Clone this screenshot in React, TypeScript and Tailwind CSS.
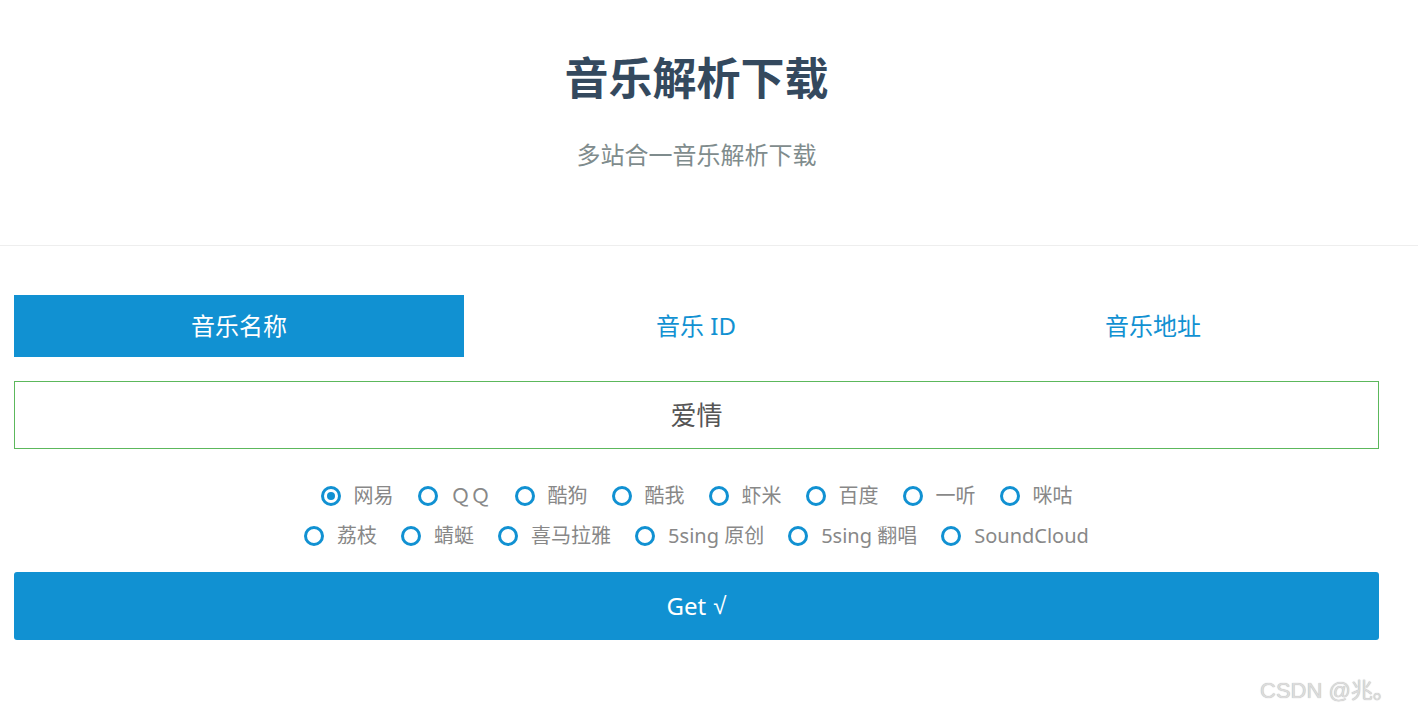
import React from "react";

const FONT = '"Noto Sans", "Noto Sans CJK SC", sans-serif';

function Radio({ label, checked }: { label: string; checked?: boolean }) {
  return (
    <label className="flex items-center mx-[12px] cursor-pointer">
      <span className="w-[20px] h-[20px] rounded-full border-[3px] border-[#1191d2] flex items-center justify-center bg-white">
        {checked && <span className="w-[8px] h-[8px] rounded-full bg-[#1191d2]" />}
      </span>
      <span className="ml-[13px] text-[20px] leading-[40px] text-[#888888]">{label}</span>
    </label>
  );
}

export default function App() {
  const row1 = ["网易", "ＱＱ", "酷狗", "酷我", "虾米", "百度", "一听", "咪咕"];
  const row2 = ["荔枝", "蜻蜓", "喜马拉雅", "5sing 原创", "5sing 翻唱", "SoundCloud"];
  return (
    <div className="w-[1418px] h-[715px] bg-white relative overflow-hidden" style={{ fontFamily: FONT }}>
      <header className="h-[246px] border-b border-[#eeeeee]">
        <div className="w-[1393px] flex flex-col items-center">
          <h1 className="mt-[52px] text-[44px] leading-[52px] font-bold text-[#34495e]">音乐解析下载</h1>
          <p className="mt-[35px] text-[24px] leading-[32px] text-[#7f8c8d]">多站合一音乐解析下载</p>
        </div>
      </header>
      <main className="px-[14px] pt-[49px] w-[1393px]">
        <div className="flex gap-[7px]">
          <div className="w-[450px] h-[62px] bg-[#1191d2] text-white text-[24px] flex items-center justify-center">音乐名称</div>
          <div className="w-[450px] h-[62px] text-[#1191d2] text-[24px] flex items-center justify-center">音乐 ID</div>
          <div className="w-[450px] h-[62px] text-[#1191d2] text-[24px] flex items-center justify-center">音乐地址</div>
        </div>
        <div className="mt-[24px] w-[1365px] h-[68px] border border-[#5cb85c] flex items-center justify-center text-[26px] text-[#555555]">
          爱情
        </div>
        <div className="mt-[27px] flex flex-col items-center w-[1365px]">
          <div className="flex justify-center">
            {row1.map((l, i) => (
              <Radio key={l} label={l} checked={i === 0} />
            ))}
          </div>
          <div className="flex justify-center">
            {row2.map((l) => (
              <Radio key={l} label={l} />
            ))}
          </div>
        </div>
        <button className="mt-[16px] w-[1365px] h-[68px] bg-[#1191d2] rounded-[3px] text-white text-[24px] flex items-center justify-center">
          Get <span className="ml-[7px]" style={{ fontFamily: '"Liberation Sans", sans-serif' }}>√</span>
        </button>
      </main>
      <div
        className="absolute left-[1260px] top-[674px] text-[22px] text-[#dcdcdc]"
        style={{ fontFamily: '"Liberation Sans", "Noto Sans CJK SC", sans-serif', textShadow: "0 0 1px #a8a8a8" }}
      >
        CSDN @兆。
      </div>
    </div>
  );
}
